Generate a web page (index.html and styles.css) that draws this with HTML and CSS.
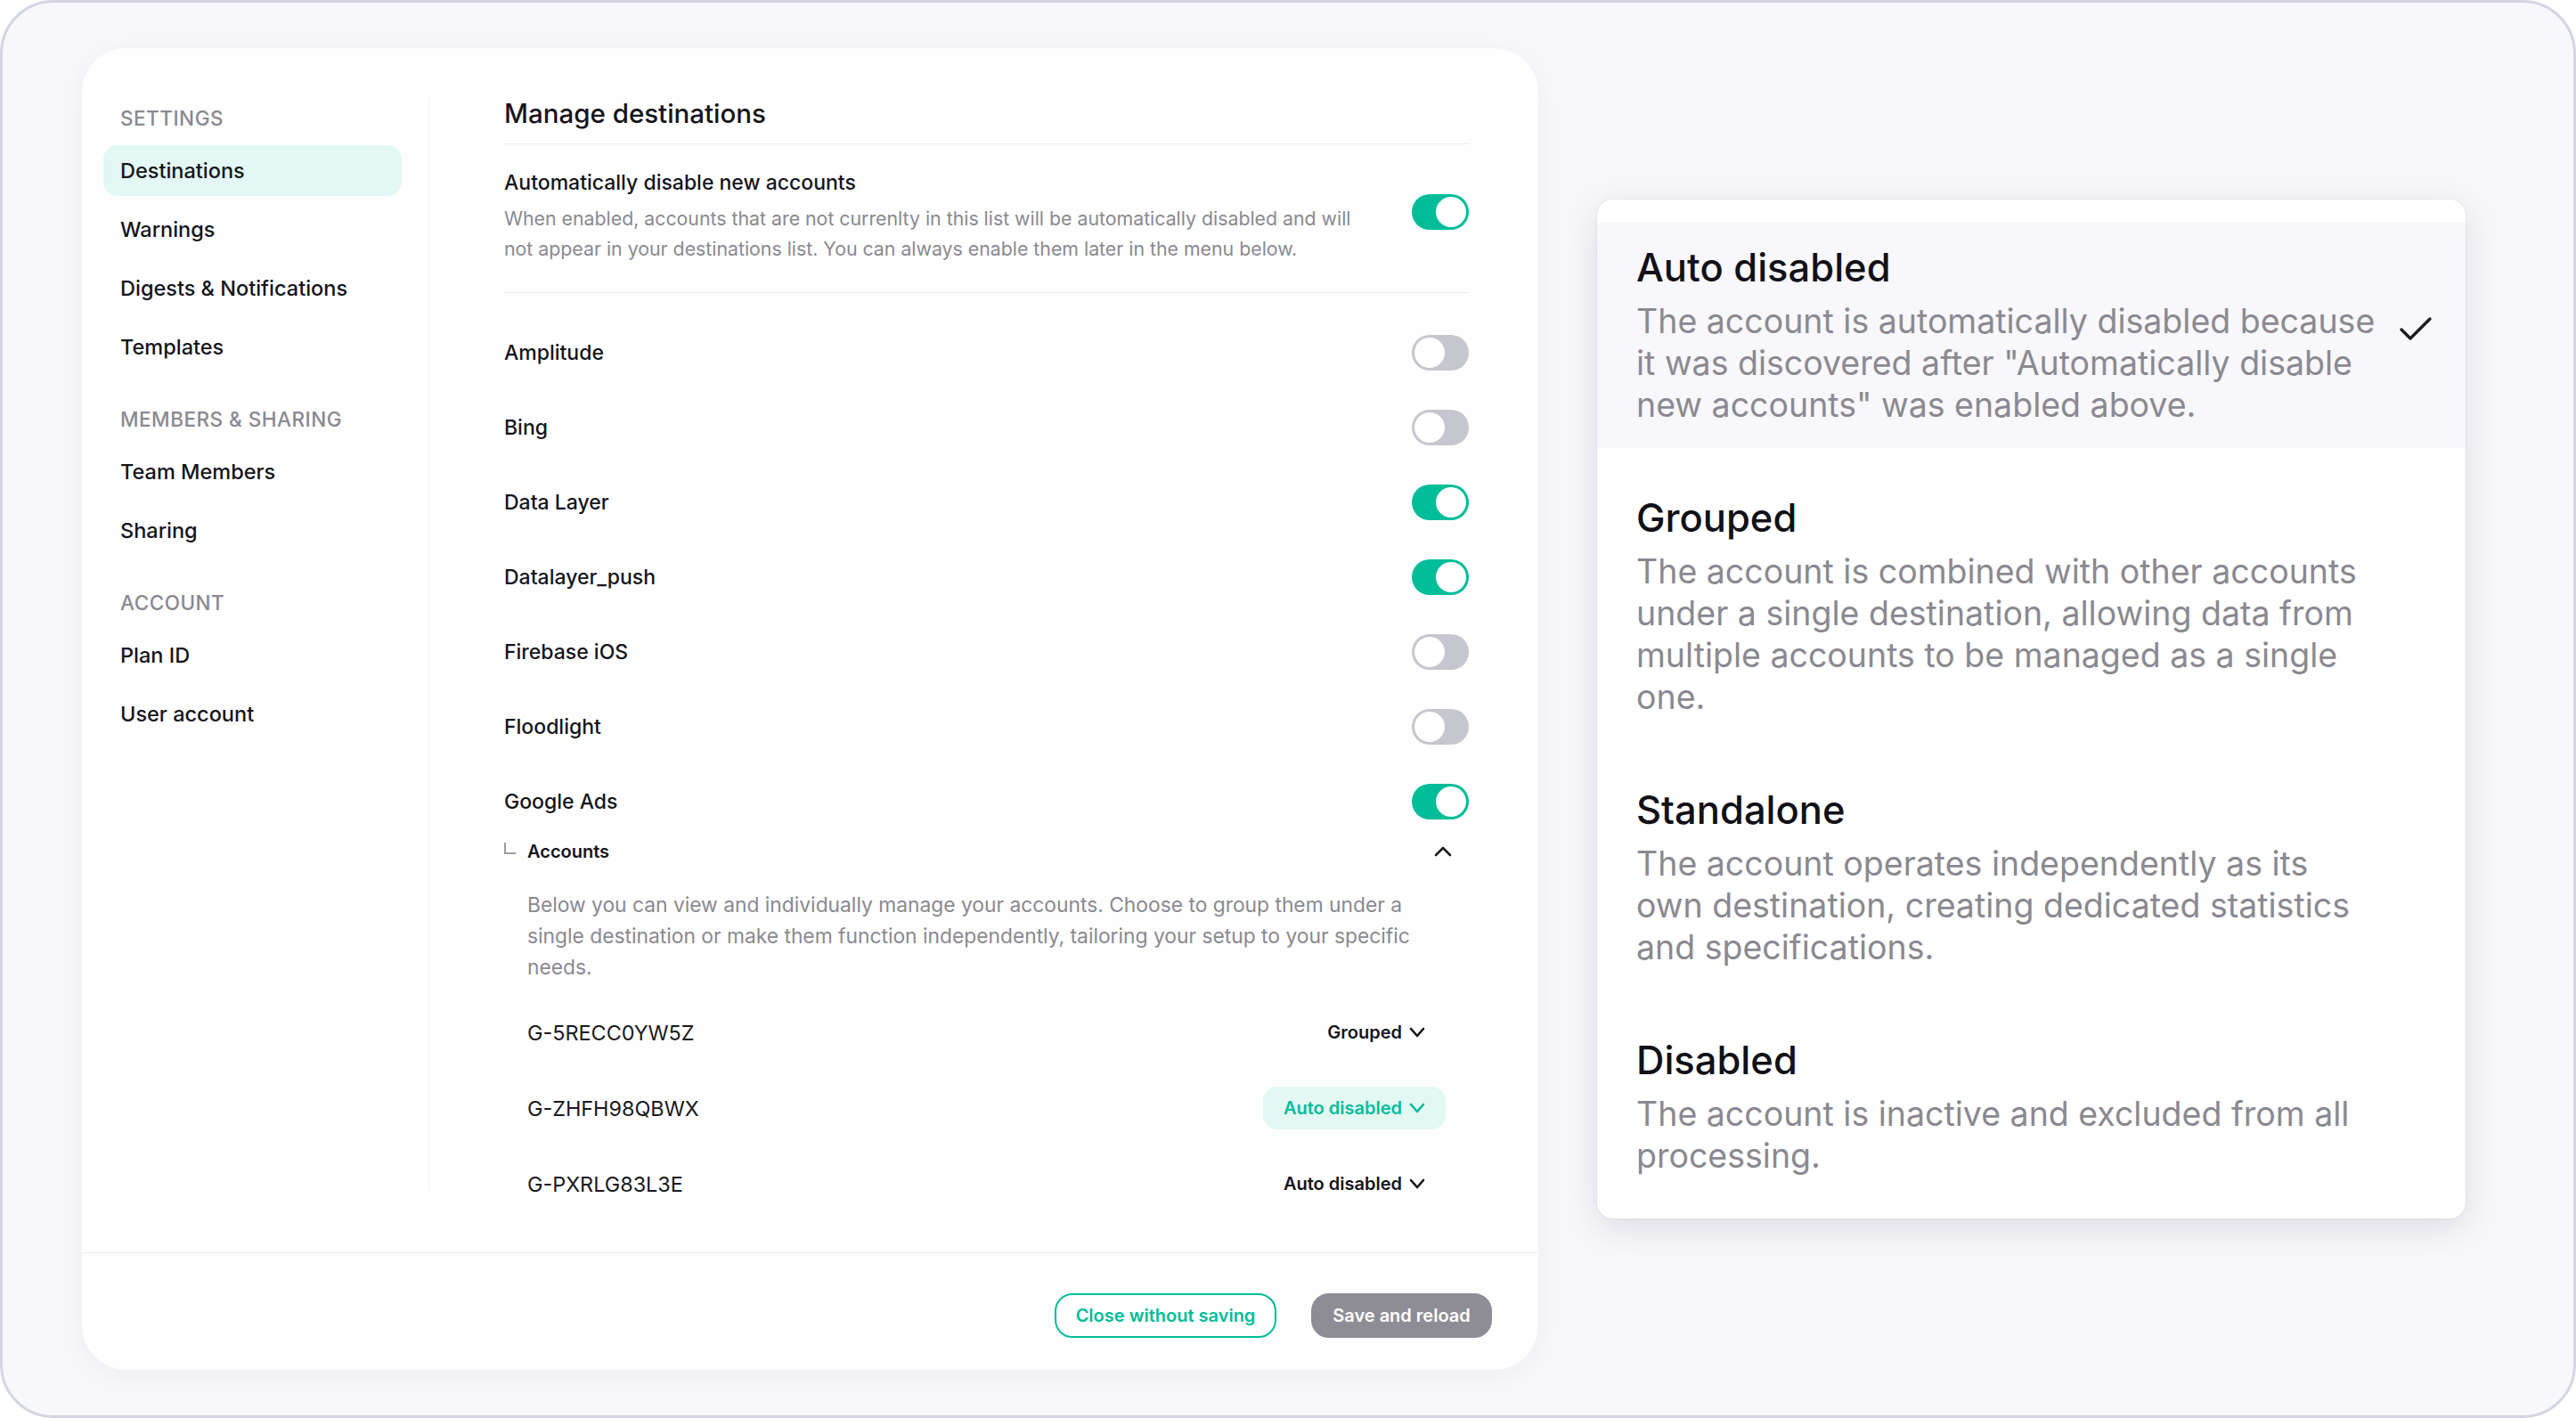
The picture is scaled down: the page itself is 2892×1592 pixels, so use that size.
FILE: index.html
```html
<!DOCTYPE html>
<html lang="en">
<head>
<meta charset="utf-8">
<title>Manage destinations</title>
<link rel="stylesheet" href="styles.css">
</head>
<body>
<div class="frame">
  <section class="card">
    <div class="card-body">
      <aside class="sidebar">
        <nav class="nav-group">
          <div class="nav-label">SETTINGS</div>
          <a class="nav-item active">Destinations</a>
          <a class="nav-item">Warnings</a>
          <a class="nav-item">Digests &amp; Notifications</a>
          <a class="nav-item">Templates</a>
        </nav>
        <nav class="nav-group">
          <div class="nav-label">MEMBERS &amp; SHARING</div>
          <a class="nav-item">Team Members</a>
          <a class="nav-item">Sharing</a>
        </nav>
        <nav class="nav-group">
          <div class="nav-label">ACCOUNT</div>
          <a class="nav-item">Plan ID</a>
          <a class="nav-item">User account</a>
        </nav>
      </aside>

      <main class="content">
        <h2 class="content-title">Manage destinations</h2>

        <div class="auto-block">
          <div class="auto-text">
            <div class="auto-title">Automatically disable new accounts</div>
            <p class="auto-desc">When enabled, accounts that are not currenlty in this list will be automatically disabled and will not appear in your destinations list. You can always enable them later in the menu below.</p>
          </div>
          <span class="toggle on auto-toggle"><span class="knob"></span></span>
        </div>

        <div class="dest-list">
          <div class="dest-row"><span class="dest-name">Amplitude</span><span class="toggle"><span class="knob"></span></span></div>
          <div class="dest-row"><span class="dest-name">Bing</span><span class="toggle"><span class="knob"></span></span></div>
          <div class="dest-row"><span class="dest-name">Data Layer</span><span class="toggle on"><span class="knob"></span></span></div>
          <div class="dest-row"><span class="dest-name">Datalayer_push</span><span class="toggle on"><span class="knob"></span></span></div>
          <div class="dest-row"><span class="dest-name">Firebase iOS</span><span class="toggle"><span class="knob"></span></span></div>
          <div class="dest-row"><span class="dest-name">Floodlight</span><span class="toggle"><span class="knob"></span></span></div>
          <div class="dest-row"><span class="dest-name">Google Ads</span><span class="toggle on"><span class="knob"></span></span></div>
        </div>

        <div class="accounts">
          <div class="accounts-head">
            <span class="elbow"></span>
            <span class="accounts-label">Accounts</span>
            <svg class="chev-up" width="20" height="12" viewBox="0 0 20 12"><polyline points="2,10 10,2 18,10" fill="none" stroke="#1b1b22" stroke-width="2.6" stroke-linecap="round" stroke-linejoin="round"/></svg>
          </div>
          <p class="accounts-desc">Below you can view and individually manage your accounts. Choose to group them under a single destination or make them function independently, tailoring your setup to your specific needs.</p>
          <div class="account-list">
            <div class="account-row">
              <span class="account-id">G-5RECC0YW5Z</span>
              <span class="status">Grouped<svg class="chev" width="18" height="12" viewBox="0 0 18 12"><polyline points="2,2 9,10 16,2" fill="none" stroke="currentColor" stroke-width="2.6" stroke-linecap="round" stroke-linejoin="round"/></svg></span>
            </div>
            <div class="account-row">
              <span class="account-id">G-ZHFH98QBWX</span>
              <span class="status active">Auto disabled<svg class="chev" width="18" height="12" viewBox="0 0 18 12"><polyline points="2,2 9,10 16,2" fill="none" stroke="currentColor" stroke-width="2.6" stroke-linecap="round" stroke-linejoin="round"/></svg></span>
            </div>
            <div class="account-row">
              <span class="account-id">G-PXRLG83L3E</span>
              <span class="status">Auto disabled<svg class="chev" width="18" height="12" viewBox="0 0 18 12"><polyline points="2,2 9,10 16,2" fill="none" stroke="currentColor" stroke-width="2.6" stroke-linecap="round" stroke-linejoin="round"/></svg></span>
            </div>
          </div>
        </div>
      </main>
    </div>

    <footer class="card-footer">
      <button class="btn btn-outline">Close without saving</button>
      <button class="btn btn-gray">Save and reload</button>
    </footer>
  </section>

  <section class="panel">
    <div class="option selected">
      <div class="option-text">
        <div class="option-title">Auto disabled</div>
        <p class="option-desc">The account is automatically disabled because it was discovered after "Automatically disable new accounts" was enabled above.</p>
      </div>
      <svg class="check" width="38" height="28" viewBox="0 0 38 28"><polyline points="3,15 13,25 35,3" fill="none" stroke="#1b1b22" stroke-width="3.4" stroke-linecap="round" stroke-linejoin="round"/></svg>
    </div>
    <div class="option">
      <div class="option-text">
        <div class="option-title">Grouped</div>
        <p class="option-desc">The account is combined with other accounts under a single destination, allowing data from multiple accounts to be managed as a single one.</p>
      </div>
    </div>
    <div class="option">
      <div class="option-text">
        <div class="option-title">Standalone</div>
        <p class="option-desc">The account operates independently as its own destination, creating dedicated statistics and specifications.</p>
      </div>
    </div>
    <div class="option">
      <div class="option-text">
        <div class="option-title">Disabled</div>
        <p class="option-desc">The account is inactive and excluded from all processing.</p>
      </div>
    </div>
  </section>
</div>
</body>
</html>
```

FILE: styles.css
```css
* { box-sizing: border-box; }

html, body {
  margin: 0;
  padding: 0;
  background: #ffffff;
}

body {
  font-family: "Inter", "Noto Sans", "Liberation Sans", sans-serif;
  color: #15151b;
}

p { margin: 0; }

.frame {
  width: 2892px;
  height: 1592px;
  border: 3px solid #d3d6e2;
  border-radius: 60px;
  background: #f8f7fb;
  display: flex;
  align-items: flex-start;
  gap: 66px;
  padding: 51px 0 0 89px;
  overflow: hidden;
}

/* ---------- main card ---------- */
.card {
  width: 1635px;
  background: #fefeff;
  border-radius: 50px;
  box-shadow: 0 6px 30px rgba(30, 30, 60, 0.05);
  display: flex;
  flex-direction: column;
}

.card-body {
  display: flex;
  align-items: flex-start;
  padding: 56px 78px 0 0;
}

.sidebar {
  width: 390px;
  height: 1227px;
  flex: none;
  border-right: 1px solid #efeef3;
  padding: 8px 30px 0 24px;
}

.nav-group {
  display: flex;
  flex-direction: column;
  gap: 9px;
}

.nav-group + .nav-group { margin-top: 38px; }

.nav-label {
  font-size: 22.5px;
  line-height: 30px;
  font-weight: 500;
  letter-spacing: 0.5px;
  color: #8a8990;
  padding-left: 19px;
  margin-bottom: 6px;
}

.nav-item {
  height: 57px;
  display: flex;
  align-items: center;
  padding-left: 19px;
  border-radius: 16px;
  font-size: 23.5px;
  font-weight: 500;
  color: #15151b;
}

.nav-item.active { background: #e3f7f4; }

.content {
  flex: 1;
  padding-left: 84px;
}

.content-title {
  margin: 0;
  font-size: 29.5px;
  line-height: 34px;
  font-weight: 500;
  padding-bottom: 17px;
  border-bottom: 1px solid #eeedf2;
}

.auto-block {
  display: flex;
  justify-content: space-between;
  align-items: center;
  padding: 28px 0 32px;
  border-bottom: 1px solid #eeedf2;
}

.auto-title {
  font-size: 23px;
  line-height: 30px;
  font-weight: 500;
}

.auto-desc {
  margin-top: 8px;
  max-width: 975px;
  font-size: 21.3px;
  line-height: 34px;
  color: #8a8990;
}

.auto-toggle { margin-bottom: 10px; }

.toggle {
  flex: none;
  width: 64px;
  height: 40px;
  border-radius: 20px;
  background: #c6c6cf;
  padding: 3px;
  display: flex;
  justify-content: flex-start;
}

.toggle.on {
  background: #00bd9a;
  justify-content: flex-end;
}

.knob {
  width: 34px;
  height: 34px;
  border-radius: 50%;
  background: #ffffff;
}

.dest-list {
  padding-top: 47px;
  display: flex;
  flex-direction: column;
  gap: 44px;
}

.dest-row {
  height: 40px;
  display: flex;
  align-items: center;
  justify-content: space-between;
}

.dest-name {
  font-size: 23px;
  font-weight: 500;
}

.accounts { margin-top: 21px; }

.accounts-head {
  height: 30px;
  display: flex;
  align-items: center;
  padding-right: 19px;
}

.elbow {
  align-self: flex-start;
  margin-top: 5px;
  width: 13px;
  height: 13px;
  border-left: 2px solid #9d9ca4;
  border-bottom: 2px solid #9d9ca4;
  margin-right: 13px;
}

.accounts-label {
  flex: 1;
  font-size: 20px;
  font-weight: 600;
}

.chev-up { display: block; }

.accounts-desc {
  margin-top: 27px;
  padding: 0 26px;
  font-size: 22.8px;
  line-height: 35px;
  color: #8a8990;
}

.account-list {
  margin-top: 32px;
  display: flex;
  flex-direction: column;
  gap: 37px;
  padding: 0 26px;
}

.account-row {
  height: 48px;
  display: flex;
  align-items: center;
  justify-content: space-between;
}

.account-id {
  font-size: 23.4px;
  color: #1a1a20;
}

.status {
  height: 48px;
  display: flex;
  align-items: center;
  gap: 8px;
  padding: 0 23px;
  border-radius: 16px;
  font-size: 20px;
  font-weight: 600;
  color: #15151b;
}

.status.active {
  background: #e3f7f3;
  color: #00bd9a;
}

.chev { display: block; }

.card-footer {
  margin-top: 53px;
  border-top: 1px solid #eeedf2;
  display: flex;
  justify-content: flex-end;
  gap: 39px;
  padding: 45px 52px 36px 0;
}

.btn {
  height: 50px;
  border-radius: 20px;
  font-family: inherit;
  font-size: 20px;
  font-weight: 600;
  padding: 0 20px;
  cursor: pointer;
}

.btn-outline {
  background: #ffffff;
  border: 2px solid #00bd9a;
  color: #00bd9a;
  width: 249px;
}

.btn-gray {
  background: #8e8d95;
  border: 2px solid #8e8d95;
  color: #ffffff;
  width: 203px;
}

/* ---------- right panel ---------- */
.panel {
  width: 975px;
  margin-top: 170px;
  background: #ffffff;
  border-radius: 18px;
  box-shadow: 0 10px 40px rgba(30, 30, 60, 0.13), 0 0 0 1px rgba(30, 30, 60, 0.04);
  padding: 26px 0 22px;
  display: flex;
  flex-direction: column;
  gap: 28px;
}

.option {
  display: flex;
  align-items: center;
  gap: 23px;
  padding: 25px 37px 25px 44px;
}

.option.selected { background: #f8f7fb; }

.option-text { width: 833px; flex: none; }

.option-title {
  font-size: 43.5px;
  line-height: 50px;
  font-weight: 500;
  color: #111117;
}

.option-desc {
  margin-top: 12px;
  font-size: 37.5px;
  line-height: 47px;
  color: #8a8990;
}

.check {
  display: block;
  margin-bottom: 16px;
}
```
